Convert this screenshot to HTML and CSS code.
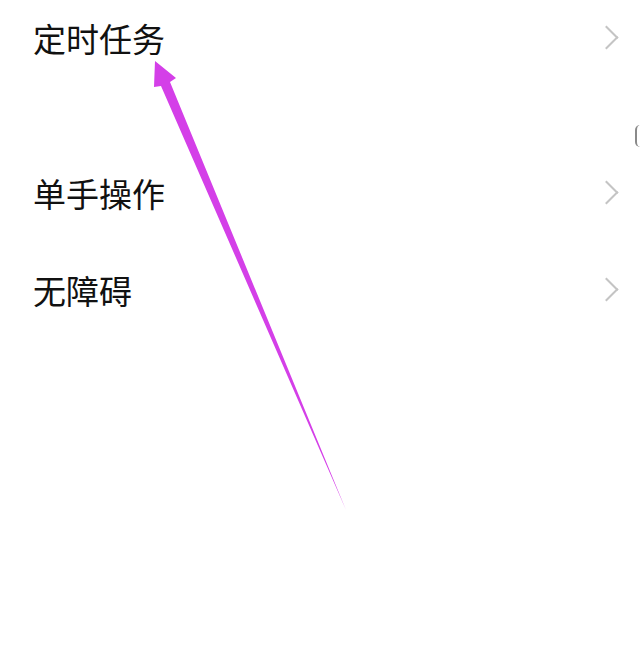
FILE: index.html
```html
<!DOCTYPE html>
<html lang="zh-CN">
<head>
    <meta charset="UTF-8">
    <meta name="viewport" content="width=device-width, initial-scale=1.0">
    <title>设置</title>
    <link rel="stylesheet" href="styles.css">
</head>
<body>
    <div id="settings-list">
        <div class="setting-row first-row">
            <span class="setting-label">定时任务</span>
            <span class="chevron"></span>
        </div>
        <div class="row-gap">
            <span class="edge-arc"></span>
        </div>
        <div class="setting-row">
            <span class="setting-label">单手操作</span>
            <span class="chevron"></span>
        </div>
        <div class="setting-row">
            <span class="setting-label">无障碍</span>
            <span class="chevron"></span>
        </div>
    </div>

    <!-- 标注箭头 -->
    <svg class="arrow-mark" width="640" height="672" viewBox="0 0 640 672">
        <polygon points="155,61 176,78 170,82 346,510 161,86 154,87" fill="#d43fe8"/>
    </svg>
</body>
</html>
```

FILE: styles.css
```css
body {
    margin: 0;
    padding: 0;
    background: #ffffff;
    font-family: "Noto Sans CJK SC", "Noto Sans", sans-serif;
    color: #111111;
    width: 640px;
    height: 672px;
    overflow: hidden;
    position: relative;
}

#settings-list {
    display: flex;
    flex-direction: column;
    padding-left: 33px;
    padding-right: 18px;
}

.setting-row {
    display: flex;
    justify-content: space-between;
    align-items: center;
    height: 97px;
}

.first-row {
    height: 80px;
}

.setting-label {
    font-size: 33px;
    line-height: 1;
    margin-top: -3px;
}

.chevron {
    width: 15px;
    height: 15px;
    border-top: 2px solid #c4c4c4;
    border-right: 2px solid #c4c4c4;
    transform: rotate(45deg);
    margin-right: 7px;
    margin-bottom: 5px;
}

.row-gap {
    height: 66px;
    display: flex;
    justify-content: flex-end;
    align-items: center;
    margin-right: -18px;
}

.edge-arc {
    width: 3px;
    height: 22px;
    border-left: 2px solid #8a8a8a;
    border-radius: 11px 0 0 11px;
    margin-top: 46px;
}

.arrow-mark {
    position: absolute;
    left: 0;
    top: 0;
}
```
